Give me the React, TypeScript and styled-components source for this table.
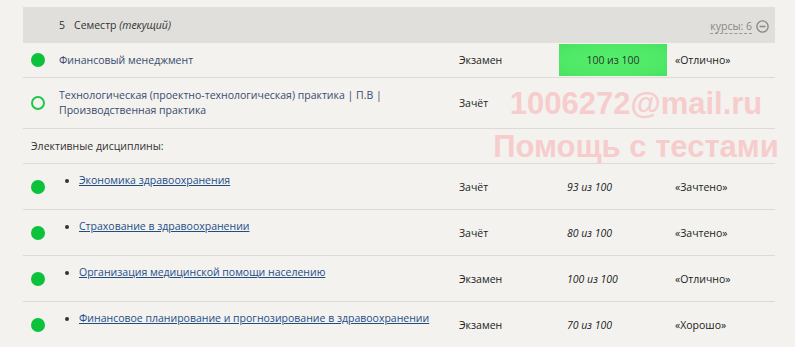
import styled, { createGlobalStyle } from 'styled-components'

const GlobalStyle = createGlobalStyle`
  body {
    margin: 0;
    background: #f3f2ef;
    font-family: "Open Sans", "Noto Sans", sans-serif;
    font-size: 10.5px;
    color: #222;
  }
`

const Page = styled.div`
  position: relative;
  width: 795px;
  height: 347px;
  overflow: hidden;
  padding: 7px 0 0 23px;
  box-sizing: border-box;
`

const Table = styled.div`
  width: 752px;
`

const SemesterHead = styled.div`
  display: flex;
  align-items: center;
  height: 36px;
  padding: 0 6px 0 36px;
  background: #e0dfdb;
  color: #333;
`

const SemNum = styled.span`
  margin-right: 9px;
`

const SemTitle = styled.span`
  flex: 1;
  em {
    font-style: italic;
  }
`

const Courses = styled.span`
  display: flex;
  align-items: center;
  gap: 4px;
  margin-top: 3px;
  color: #888;
`

const Dashed = styled.span`
  border-bottom: 1px dashed #999;
  line-height: 13px;
`

const Row = styled.div<{ $h: number }>`
  display: grid;
  grid-template-columns: 36px 392px 108px 108px 108px;
  align-items: center;
  min-height: ${(p) => p.$h}px;
  border-bottom: 1px solid #dcdbd7;
`

const Dot = styled.span<{ $hollow?: boolean }>`
  display: block;
  width: 14px;
  height: 14px;
  margin-left: 8px;
  border-radius: 50%;
  box-sizing: border-box;
  background: ${(p) => (p.$hollow ? 'transparent' : '#0bc23a')};
  border: ${(p) => (p.$hollow ? '2px solid #1fc748' : 'none')};
`

const Name = styled.div`
  color: #3a4b6e;
  line-height: 15px;
  padding-right: 8px;
`

const Cell = styled.div<{ $italic?: boolean }>`
  padding-left: 8px;
  color: #222;
  font-style: ${(p) => (p.$italic ? 'italic' : 'normal')};
`

const ScoreBox = styled.div`
  align-self: stretch;
  margin: 1px 0;
  display: flex;
  align-items: center;
  justify-content: center;
  background: radial-gradient(ellipse at center, #55ee6c 0%, #4ee866 70%, #48e062 100%);
  color: #2b372d;
`

const Section = styled.div`
  display: flex;
  align-items: center;
  height: 34px;
  padding-left: 8px;
  border-bottom: 1px solid #dcdbd7;
  color: #333;
`

const List = styled.ul`
  margin: 0 0 13px;
  padding-left: 20px;
  li {
    color: #333;
  }
  a {
    color: #1f4e86;
    text-decoration: underline;
  }
`

const Watermark = styled.div`
  position: absolute;
  left: 486px;
  width: 300px;
  top: 82px;
  text-align: center;
  font-family: "Liberation Sans", Arial, sans-serif;
  font-weight: bold;
  font-size: 31px;
  line-height: 43px;
  color: #f6cdcc;
  pointer-events: none;
`

type Elective = { name: string; kind: string; score: string; result: string }

const electives: Elective[] = [
  { name: 'Экономика здравоохранения', kind: 'Зачёт', score: '93 из 100', result: '«Зачтено»' },
  { name: 'Страхование в здравоохранении', kind: 'Зачёт', score: '80 из 100', result: '«Зачтено»' },
  { name: 'Организация медицинской помощи населению', kind: 'Экзамен', score: '100 из 100', result: '«Отлично»' },
  { name: 'Финансовое планирование и прогнозирование в здравоохранении', kind: 'Экзамен', score: '70 из 100', result: '«Хорошо»' },
]

function MinusCircle() {
  return (
    <svg width="13" height="13" viewBox="0 0 13 13">
      <circle cx="6.5" cy="6.5" r="5.6" fill="none" stroke="#8a8a8a" strokeWidth="1.4" />
      <line x1="3.6" y1="6.5" x2="9.4" y2="6.5" stroke="#8a8a8a" strokeWidth="1.6" />
    </svg>
  )
}

export default function App() {
  return (
    <>
      <GlobalStyle />
      <Page>
        <Table>
          <SemesterHead>
            <SemNum>5</SemNum>
            <SemTitle>
              Семестр <em>(текущий)</em>
            </SemTitle>
            <Courses>
              <Dashed>курсы: 6</Dashed>
              <MinusCircle />
            </Courses>
          </SemesterHead>

          <Row $h={34}>
            <Dot />
            <Name>Финансовый менеджмент</Name>
            <Cell>Экзамен</Cell>
            <ScoreBox>100 из 100</ScoreBox>
            <Cell>«Отлично»</Cell>
          </Row>

          <Row $h={50}>
            <Dot $hollow />
            <Name>
              Технологическая (проектно-технологическая) практика | П.В |
              <br />
              Производственная практика
            </Name>
            <Cell>Зачёт</Cell>
            <Cell />
            <Cell />
          </Row>

          <Section>Элективные дисциплины:</Section>

          {electives.map((e) => (
            <Row $h={45} key={e.name}>
              <Dot />
              <Name>
                <List>
                  <li>
                    <a href="#">{e.name}</a>
                  </li>
                </List>
              </Name>
              <Cell>{e.kind}</Cell>
              <Cell $italic>{e.score}</Cell>
              <Cell>{e.result}</Cell>
            </Row>
          ))}
        </Table>

        <Watermark>
          1006272@mail.ru
          <br />
          Помощь с тестами
        </Watermark>
      </Page>
    </>
  )
}
